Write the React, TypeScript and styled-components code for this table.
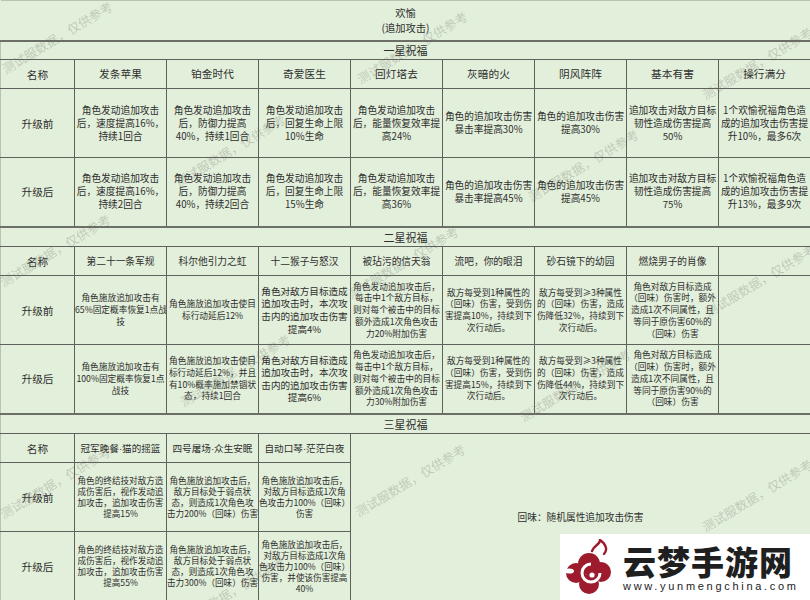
import { FC } from 'react';
import styled, { createGlobalStyle } from 'styled-components';

const GlobalStyle = createGlobalStyle`
  html, body {
    margin: 0;
    padding: 0;
    background: #e2efda;
  }
  body {
    font-family: 'Noto Sans CJK SC', 'Noto Sans', sans-serif;
    color: #2e2e2e;
  }
`;

type Lines = string[];

interface Section {
    title: string;
    heads: string[];
    headSize: number;
    bodySize: number;
    bodyLine: number;
    colSize?: Record<number, [number, number]>;
    before: Lines[];
    after: Lines[];
}

const oneStar: Section = {
    title: '一星祝福',
    heads: ['发条苹果', '铂金时代', '奇爱医生', '回灯塔去', '灰暗的火', '阴风阵阵', '基本有害', '操行满分'],
    headSize: 10.7,
    bodySize: 9.7,
    bodyLine: 13,
    before: [
        ['角色发动追加攻击', '后，速度提高16%，', '持续1回合'],
        ['角色发动追加攻击', '后，防御力提高', '40%，持续1回合'],
        ['角色发动追加攻击', '后，回复生命上限', '10%生命'],
        ['角色发动追加攻击', '后，能量恢复效率提', '高24%'],
        ['角色的追加攻击伤害', '暴击率提高30%'],
        ['角色的追加攻击伤害', '提高30%'],
        ['追加攻击对敌方目标', '韧性造成伤害提高', '50%'],
        ['1个欢愉祝福角色造', '成的追加攻击伤害提', '升10%，最多6次'],
    ],
    after: [
        ['角色发动追加攻击', '后，速度提高16%，', '持续2回合'],
        ['角色发动追加攻击', '后，防御力提高', '40%，持续2回合'],
        ['角色发动追加攻击', '后，回复生命上限', '15%生命'],
        ['角色发动追加攻击', '后，能量恢复效率提', '高36%'],
        ['角色的追加攻击伤害', '暴击率提高45%'],
        ['角色的追加攻击伤害', '提高45%'],
        ['追加攻击对敌方目标', '韧性造成伤害提高', '75%'],
        ['1个欢愉祝福角色造', '成的追加攻击伤害提', '升13%，最多9次'],
    ],
};

const twoStar: Section = {
    title: '二星祝福',
    heads: ['第二十一条军规', '科尔他引力之虹', '十二猴子与怒汉', '被玷污的信天翁', '流吧，你的眼泪', '砂石镜下的幼园', '燃烧男子的肖像', ''],
    headSize: 9.7,
    bodySize: 8.7,
    bodyLine: 11.7,
    colSize: { 2: [9.6, 12.6] },
    before: [
        ['角色施放追加攻击有', '65%固定概率恢复1点战', '技'],
        ['角色施放追加攻击使目', '标行动延后12%'],
        ['角色对敌方目标造成', '追加攻击时，本次攻', '击内的追加攻击伤害', '提高4%'],
        ['角色发动追加攻击后，', '每击中1个敌方目标，', '则对每个被击中的目标', '额外造成1次角色攻击', '力20%附加伤害'],
        ['敌方每受到1种属性的', '（回味）伤害，受到伤', '害提高10%，持续到下', '次行动后。'],
        ['敌方每受到≥3种属性', '的（回味）伤害，造成', '伤降低32%，持续到下', '次行动后。'],
        ['角色对敌方目标造成', '（回味）伤害时，额外', '造成1次不同属性，且', '等同于原伤害60%的', '（回味）伤害'],
        [],
    ],
    after: [
        ['角色施放追加攻击有', '100%固定概率恢复1点', '战技'],
        ['角色施放追加攻击使目', '标行动延后12%，并且', '有10%概率施加禁锢状', '态，持续1回合'],
        ['角色对敌方目标造成', '追加攻击时，本次攻', '击内的追加攻击伤害', '提高6%'],
        ['角色发动追加攻击后，', '每击中1个敌方目标，', '则对每个被击中的目标', '额外造成1次角色攻击', '力30%附加伤害'],
        ['敌方每受到1种属性的', '（回味）伤害，受到伤', '害提高15%，持续到下', '次行动后。'],
        ['敌方每受到≥3种属性', '的（回味）伤害，造成', '伤降低44%，持续到下', '次行动后。'],
        ['角色对敌方目标造成', '（回味）伤害时，额外', '造成1次不同属性，且', '等同于原伤害90%的', '（回味）伤害'],
        [],
    ],
};

const threeStar: Section = {
    title: '三星祝福',
    heads: ['冠军晚餐·猫的摇篮', '四号屠场·众生安眠', '自动口琴·茫茫白夜'],
    headSize: 9.6,
    bodySize: 8.6,
    bodyLine: 11,
    before: [
        ['角色的终结技对敌方造', '成伤害后，视作发动追', '加攻击，追加攻击伤害', '提高15%'],
        ['角色施放追加攻击后，', '敌方目标处于弱点状', '态，则造成1次角色攻', '击力200%（回味）伤害'],
        ['角色施放追加攻击后，', '对敌方目标造成1次角', '色攻击力100%（回味）', '伤害'],
    ],
    after: [
        ['角色的终结技对敌方造', '成伤害后，视作发动追', '加攻击，追加攻击伤害', '提高55%'],
        ['角色施放追加攻击后，', '敌方目标处于弱点状', '态，则造成1次角色攻', '击力300%（回味）伤害'],
        ['角色施放追加攻击后，', '对敌方目标造成1次角', '色攻击力100%（回味）', '伤害，并使该伤害提高', '40%'],
    ],
};

// watermark centres, as they lie over the sheet
const marks: [number, number][] = [
    [57, 37], [412, 47], [757, 63],
    [230, 150], [583, 165],
    [55, 250], [403, 262], [760, 280],
    [235, 370], [575, 385],
    [55, 482], [410, 480], [757, 495],
    [230, 592], [583, 600],
];

const Text: FC<{ lines: Lines }> = ({ lines }) => (
    <>
        {lines.map((l, i) => (
            <div key={i}>{l}</div>
        ))}
    </>
);

const SectionRows: FC<{ s: Section; merged?: string }> = ({ s, merged }) => {
    const body = (label: string, cells: Lines[]) => (
        <Row $h={69}>
            <NameCell>{label}</NameCell>
            {cells.map((c, i) => {
                const [size, lh] = s.colSize?.[i] ?? [s.bodySize, s.bodyLine];
                return (
                    <Cell key={i} $size={size} $lh={lh}>
                        <Text lines={c} />
                    </Cell>
                );
            })}
        </Row>
    );
    return (
        <>
            <Row $h={s === oneStar ? 19 : 20}>
                <Band colSpan={9}>{s.title}</Band>
            </Row>
            <Row $h={29}>
                <NameCell>名称</NameCell>
                {s.heads.map((h, i) => (
                    <HeadCell key={i} $size={s.headSize} $lh={13}>
                        {h}
                    </HeadCell>
                ))}
                {merged && (
                    <Note colSpan={9 - 1 - s.heads.length} rowSpan={3}>
                        {merged}
                    </Note>
                )}
            </Row>
            {body('升级前', s.before)}
            {body('升级后', s.after)}
        </>
    );
};

const Logo: FC = () => (
    <LogoBox>
        <svg width="48" height="56" viewBox="0 0 48 56">
            <g fill="#9e1b2d">
                <circle cx="24" cy="25" r="11" />
                <circle cx="11" cy="34" r="10" />
                <circle cx="36" cy="33" r="10" />
                <circle cx="24" cy="45" r="10" />
            </g>
            <path
                d="M27 12 C 29 6, 35 6, 35 1 C 41 5, 43 11, 39 15"
                fill="none"
                stroke="#9e1b2d"
                strokeWidth="2.4"
                strokeLinecap="round"
            />
            <ellipse cx="4" cy="32" rx="5" ry="2.6" fill="#fff" />
            <path d="M26 25 A 9 9 0 1 0 35 34" fill="none" stroke="#fff" strokeWidth="3" />
            <circle cx="27" cy="36" r="2.6" fill="#fff" />
        </svg>
        <LogoText>
            <LogoName>云梦手游网</LogoName>
            <LogoUrl>www.yunmengchina.com</LogoUrl>
        </LogoText>
    </LogoBox>
);

export default function App() {
    return (
        <Page>
            <GlobalStyle />
            <Sheet>
                <colgroup>
                    <col style={{ width: 74 }} />
                    {Array.from({ length: 8 }, (_, i) => (
                        <col key={i} style={{ width: 92 }} />
                    ))}
                </colgroup>
                <tbody>
                    <Row $h={40}>
                        <Title colSpan={9}>
                            <div>欢愉</div>
                            <div>(追加攻击)</div>
                        </Title>
                    </Row>
                    <SectionRows s={oneStar} />
                    <SectionRows s={twoStar} />
                    <SectionRows s={threeStar} merged='回味：随机属性追加攻击伤害' />
                </tbody>
            </Sheet>
            {marks.map(([x, y], i) => (
                <Mark key={i} style={{ left: x, top: y }}>
                    测试服数据，仅供参考
                </Mark>
            ))}
            <Logo />
        </Page>
    );
}

const Page = styled.div`
    position: relative;
    width: 810px;
    height: 600px;
    overflow: hidden;
    background: #e2efda;
`;

const Sheet = styled.table`
    width: 811px;
    table-layout: fixed;
    border-collapse: collapse;
    border-top: 1px solid #b9c2b3;
`;

const Row = styled.tr<{ $h: number }>`
    height: ${(p) => p.$h}px;
`;

const Cell = styled.td<{ $size: number; $lh: number }>`
    border: 1px solid #5e625b;
    padding: 0;
    text-align: center;
    vertical-align: middle;
    white-space: nowrap;
    overflow: hidden;
    font-size: ${(p) => p.$size}px;
    line-height: ${(p) => p.$lh}px;
    color: #2e2e2e;
`;

const HeadCell = styled(Cell)`
    font-family: 'Liberation Sans', 'Noto Sans CJK SC', sans-serif;
`;

const NameCell = styled.td`
    border: 1px solid #5e625b;
    border-left-color: #b9c2b3;
    padding: 0;
    text-align: center;
    font-size: 10.7px;
    color: #2e2e2e;
`;

const Band = styled.td`
    border: 1px solid #5e625b;
    border-left-color: #b9c2b3;
    border-top: 2px solid #6b6f68;
    padding: 0;
    text-align: center;
    font-size: 11px;
    line-height: 16px;
    color: #2e2e2e;
`;

const Title = styled.td`
    border-bottom: 1px solid #5e625b;
    padding: 0;
    text-align: center;
    font-size: 10.3px;
    line-height: 15px;
    color: #2e2e2e;
`;

const Note = styled.td`
    border: 1px solid #5e625b;
    padding: 0;
    text-align: center;
    vertical-align: middle;
    font-size: 9.7px;
    color: #2e2e2e;
`;

const Mark = styled.span`
    position: absolute;
    transform: translate(-50%, -50%) rotate(-31deg);
    font-size: 12.6px;
    white-space: nowrap;
    color: rgba(95, 100, 92, 0.28);
    pointer-events: none;
`;

const LogoBox = styled.div`
    position: absolute;
    left: 560px;
    top: 534px;
    width: 250px;
    height: 66px;
    background: #fff;
    display: flex;
    align-items: center;
    gap: 10px;
    padding-left: 5px;
    box-sizing: border-box;
`;

const LogoText = styled.div`
    display: flex;
    flex-direction: column;
    align-items: flex-start;
`;

const LogoName = styled.div`
    font-family: 'Noto Sans CJK SC', sans-serif;
    font-weight: 900;
    font-size: 33px;
    line-height: 38px;
    color: #1f1f1f;
    letter-spacing: 1px;
`;

const LogoUrl = styled.div`
    font-family: 'Liberation Sans', sans-serif;
    font-size: 11px;
    line-height: 13px;
    letter-spacing: 2.7px;
    color: #222;
`;
